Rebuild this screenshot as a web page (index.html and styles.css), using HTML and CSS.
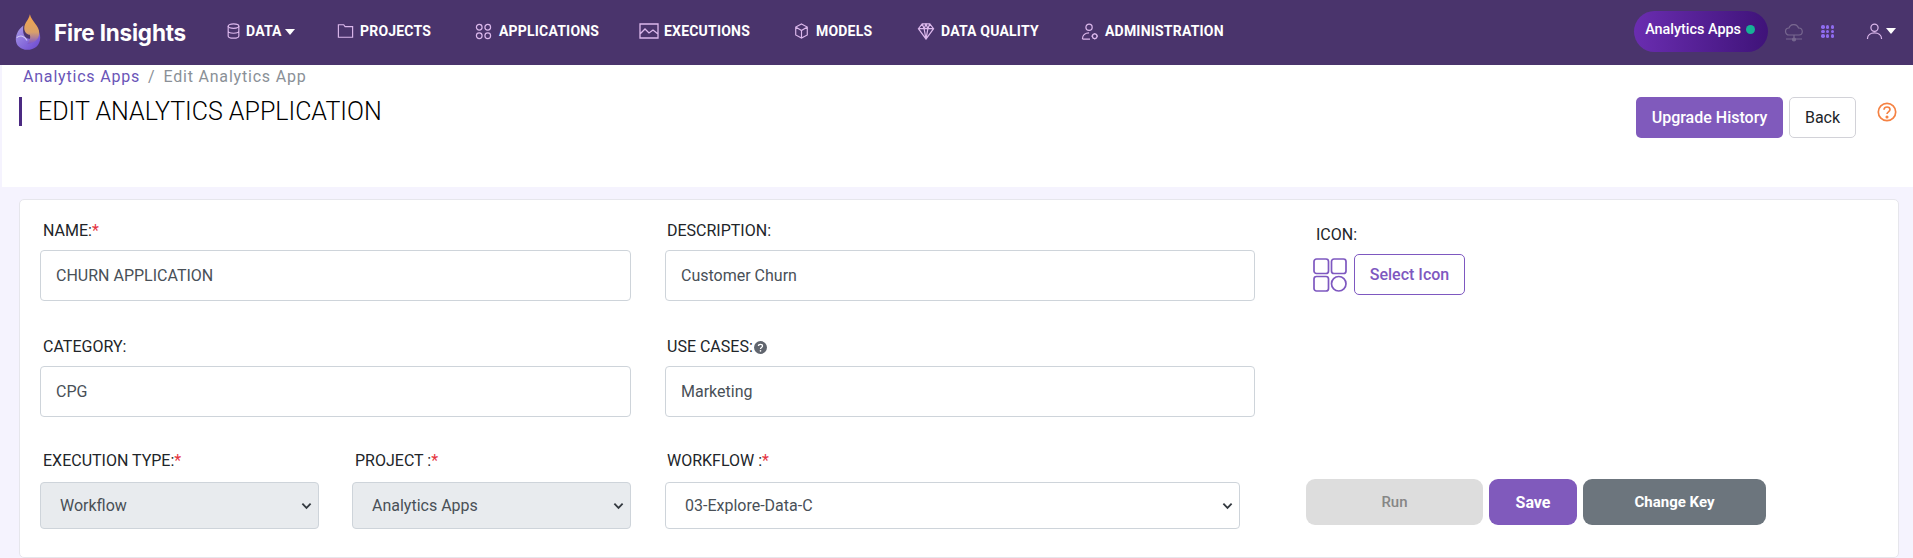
FILE: index.html
```html
<!DOCTYPE html>
<html lang="en">
<head>
<meta charset="utf-8">
<title>Edit Analytics Application</title>
<link rel="stylesheet" href="styles.css">
</head>
<body>
<nav class="nav">
  <div class="brand">
    <svg class="logo" viewBox="0 0 32 40" width="32" height="40">
      <defs>
        <linearGradient id="fl" x1="0" y1="0" x2="0" y2="1"><stop offset="0" stop-color="#f5a54a"/><stop offset=".6" stop-color="#d9a06a"/><stop offset="1" stop-color="#7a55d0"/></linearGradient>
        <linearGradient id="bl" x1="0" y1="0" x2="1" y2="1"><stop offset="0" stop-color="#a99be8"/><stop offset="1" stop-color="#6a45cf"/></linearGradient>
      </defs>
      <path d="M11 13C6 17 3 22 3 28c0 7 6 11 12 11 8 0 14-5 14-13 0-3-1-5-2-7-2 6-6 9-11 8-4-1-6-6-5-14z" fill="url(#bl)"/>
      <path d="M18 1c-1 6-6 9-6 15 0 4 3 7 6 7 1 3 0 7-3 10 7-1 13-5 13-12 0-8-8-12-10-20z" fill="url(#fl)"/>
      <path d="M4 26c4-3 8-2 11 3" fill="none" stroke="#d5cdf5" stroke-width="1.2"/>
    </svg>
    <span class="brand-name">Fire Insights</span>
  </div>
  <ul class="menu">
    <li class="item item-data"><svg class="ico" viewBox="0 0 16 18" width="15" height="16"><ellipse cx="8" cy="3.5" rx="6" ry="2.5"/><path d="M2 3.5v11c0 1.4 2.7 2.5 6 2.5s6-1.100 6-2.500v-11M2 9c0 1.400 2.700 2.500 6 2.500S14 10.400 14 9"/></svg>DATA<span class="caret"></span></li>
    <li class="item item-projects"><svg class="ico" viewBox="0 0 18 18" width="17" height="16"><path d="M1 16V2h6l1.500 2H17v12z"/></svg>PROJECTS</li>
    <li class="item item-apps"><svg class="ico" viewBox="0 0 18 18" width="17" height="17"><circle cx="4.500" cy="4.500" r="3"/><circle cx="13.500" cy="4.500" r="3"/><circle cx="4.500" cy="13.500" r="3"/><circle cx="13.500" cy="13.500" r="3"/></svg>APPLICATIONS</li>
    <li class="item item-exec"><svg class="ico" viewBox="0 0 20 16" width="20" height="16"><path d="M1 1h18v14H1zM1 11l5-5 4 4 4-3 5 4"/></svg>EXECUTIONS</li>
    <li class="item item-models"><svg class="ico" viewBox="0 0 16 18" width="15" height="16"><path d="M8 1l6.500 3.500v9L8 17l-6.500-3.500v-9zM1.500 4.500L8 8.500l6.500-4M8 8.500V17"/></svg>MODELS</li>
    <li class="item item-quality"><svg class="ico" viewBox="0 0 18 18" width="18" height="17"><path d="M5 1h8l4 5-8 11L1 6zM1 6h16M5 1l2 5 2 11 2-11 2-5M7 6l2-5 2 5"/></svg>DATA QUALITY</li>
    <li class="item item-admin"><svg class="ico" viewBox="0 0 18 18" width="18" height="17"><circle cx="8" cy="4.500" r="3.300"/><path d="M1 17c0-4 3-6.500 7-6.500M1 17h8"/><circle cx="14" cy="14" r="2.400"/><path d="M14 10.500v1M14 16.500v1M10.500 14h1M16.500 14h1"/></svg>ADMINISTRATION</li>
  </ul>
  <div class="nav-right">
    <div class="pill">Analytics Apps<span class="dot"></span></div>
    <svg class="cloud" viewBox="0 0 20 18" width="20" height="18"><path d="M5 11a3.500 3.500 0 0 1 0-7 5 5 0 0 1 9.500 0 3.500 3.500 0 0 1 .5 7zM10 11v4M2 15h16"/><circle cx="10" cy="15.500" r="1.500"/></svg>
    <div class="grid-ico"><i></i><i></i><i></i><i></i><i></i><i></i><i></i><i></i><i></i></div>
    <div class="user">
      <svg class="ico" viewBox="0 0 18 18" width="17" height="17"><circle cx="9" cy="5" r="3.800"/><path d="M1.500 17c0-4 3.300-6.500 7.500-6.500s7.500 2.500 7.500 6.500"/></svg>
      <span class="caret"></span>
    </div>
  </div>
</nav>

<header class="head">
  <div class="head-left">
    <div class="crumbs"><a class="crumb-link">Analytics Apps</a><span class="crumb-sep">/</span><span class="crumb-cur">Edit Analytics App</span></div>
    <h1 class="title">EDIT ANALYTICS APPLICATION</h1>
  </div>
  <div class="head-actions">
    <button class="btn btn-purple btn-upgrade">Upgrade History</button>
    <button class="btn btn-back">Back</button>
    <svg class="help" viewBox="0 0 20 20" width="20" height="20"><circle cx="10" cy="10" r="8.700"/><path d="M7 7.700C7 5.800 8.300 5 10 5s3 .9 3 2.500c0 2.300-3 2.300-3 4.500"/><circle class="help-dot" cx="10" cy="15" r=".7"/></svg>
  </div>
</header>

<main class="card">
  <form class="form">
    <div class="field">
      <label class="label">NAME:<span class="req">*</span></label>
      <div class="input">CHURN APPLICATION</div>
    </div>
    <div class="field field-mid">
      <label class="label">DESCRIPTION:</label>
      <div class="input">Customer Churn</div>
    </div>
    <div class="field field-icon">
      <label class="label">ICON:</label>
      <div class="icon-row">
        <svg class="app-icon" viewBox="0 0 34 34" width="34" height="34"><rect x="1" y="1" width="14.500" height="14.500" rx="2.500"/><rect x="18.500" y="1" width="14.500" height="14.500" rx="2.500"/><rect x="1" y="18.500" width="14.500" height="14.500" rx="2.500"/><circle cx="25.750" cy="25.750" r="7.250"/></svg>
        <button type="button" class="btn btn-outline">Select Icon</button>
      </div>
    </div>
    <div class="field">
      <label class="label">CATEGORY:</label>
      <div class="input">CPG</div>
    </div>
    <div class="field field-mid">
      <label class="label">USE CASES:<svg class="q" viewBox="0 0 14 14" width="13" height="13"><circle cx="7" cy="7" r="7"/><path d="M4.800 5.500C4.800 4.200 5.800 3.600 7 3.600s2.200.7 2.200 1.800C9.200 7 7 7 7 8.500"/><circle class="q-dot" cx="7" cy="10.600" r=".9"/></svg></label>
      <div class="input">Marketing</div>
    </div>
    <div class="spacer"></div>
    <div class="pair">
      <div class="field">
        <label class="label label-low">EXECUTION TYPE:<span class="req">*</span></label>
        <div class="select disabled">Workflow<svg class="chev" viewBox="0 0 12 8" width="11" height="8"><path d="M1.500 1.500L6 6l4.500-4.500"/></svg></div>
      </div>
      <div class="field">
        <label class="label label-low">PROJECT :<span class="req">*</span></label>
        <div class="select disabled">Analytics Apps<svg class="chev" viewBox="0 0 12 8" width="11" height="8"><path d="M1.500 1.500L6 6l4.500-4.500"/></svg></div>
      </div>
    </div>
    <div class="field field-wf field-mid">
      <label class="label label-low">WORKFLOW :<span class="req">*</span></label>
      <div class="select">03-Explore-Data-C<svg class="chev" viewBox="0 0 12 8" width="11" height="8"><path d="M1.500 1.500L6 6l4.500-4.500"/></svg></div>
    </div>
    <div class="actions">
      <button type="button" class="btn act act-run">Run</button>
      <button type="button" class="btn act act-save">Save</button>
      <button type="button" class="btn act act-key">Change Key</button>
    </div>
  </form>
</main>
</body>
</html>
```
FILE: styles.css
```css
* { box-sizing: border-box; }
html, body { margin: 0; padding: 0; }
body {
  height: 558px;
  overflow: hidden;
  background: #f5f3fe;
  font-family: Roboto, "Liberation Sans", sans-serif;
  color: #212529;
}
.nav {
  height: 65px;
  background: #4a346c;
  display: flex;
  align-items: center;
  padding-left: 13px;
  color: #fff;
}
.brand { display: flex; align-items: center; width: 213px; flex: none; }
.logo { margin-right: 11px; margin-top: -1px; width: 30px; }
.brand-name { font-family: Inter, "Open Sans", sans-serif; font-size: 22.500px; font-weight: 700; letter-spacing: -.2px; }
.menu { list-style: none; margin: 0; padding: 0; display: flex; align-items: center; flex: 1; }
.item {
  display: flex;
  align-items: center;
  font-size: 14px;
  font-weight: 700;
  letter-spacing: .2px;
  white-space: nowrap;
  margin-top: -3px;
}
.ico {
  fill: none;
  stroke: #dcb8ec;
  stroke-width: 1.300;
  margin-right: 5px;
  flex: none;
}
.item-data { width: 111px; }
.item-projects { width: 138px; }
.item-projects .ico { margin-right: 6px; }
.item-apps { width: 164px; }
.item-apps .ico { margin-right: 7px; }
.item-exec { width: 155px; }
.item-exec .ico { margin-right: 5px; }
.item-models { width: 123px; }
.item-models .ico { margin-right: 7px; }
.item-quality { width: 164px; }
.item-quality .ico { margin-right: 6px; }
.item-admin .ico { margin-right: 6px; }
.caret {
  display: inline-block;
  width: 0;
  height: 0;
  border-left: 5px solid transparent;
  border-right: 5px solid transparent;
  border-top: 6px solid #fff;
  margin-left: 3px;
  margin-top: 2px;
}
.nav-right { display: flex; align-items: center; flex: none; }
.pill {
  width: 134px;
  height: 41px;
  margin-top: -3px;
  margin-right: 16px;
  border-radius: 21px;
  background: linear-gradient(90deg, #6a2db0, #3f1379);
  font-size: 14.400px;
  font-weight: 500;
  display: flex;
  align-items: center;
  padding: 0 0 4px 11px;
  white-space: nowrap;
}
.dot { width: 9px; height: 9px; border-radius: 50%; background: #17b197; margin-left: 5px; }
.cloud { fill: none; stroke: #77678f; stroke-width: 1.200; margin-right: 17px; }
.cloud circle { fill: #77678f; }
.grid-ico { display: grid; grid-template-columns: repeat(3, 3.500px); gap: 1.200px; margin-right: 32px; margin-top: -2px; }
.grid-ico i { display: block; width: 3.500px; height: 3.500px; border-radius: 50%; background: #8f6cf0; }
.user { display: flex; align-items: center; margin-right: 17px; margin-top: -2px; }
.user .ico { margin-right: 0; }
.user .caret { margin-left: 3px; margin-top: -1px; }

.head {
  height: 122px;
  margin-left: 2px;
  background: #fff;
  display: flex;
  justify-content: space-between;
  padding-left: 17px;
}
.head-left { flex: 1; }
.crumbs { padding: 2px 0 0 4px; font-size: 16px; line-height: 20px; letter-spacing: .8px; }
.crumb-link { color: #6a55b8; }
.crumb-sep { color: #8a9097; margin: 0 8px; }
.crumb-cur { color: #8a9097; }
.title {
  margin: 10px 0 0;
  height: 29px;
  padding-left: 16px;
  border-left: 3px solid #4b2a82;
  font-size: 25px;
  font-weight: 300;
  color: #000;
  line-height: 29px;
  letter-spacing: 0;
}
.head-actions { display: flex; align-items: flex-start; padding: 32px 16px 0 0; }
.btn {
  font-family: inherit;
  border-radius: 5px;
  border: 1px solid transparent;
  font-size: 15px;
  cursor: pointer;
  padding: 0;
}
.btn-purple { background: #805abc; color: #fff; font-weight: 500; }
.btn-upgrade { width: 147px; height: 41px; margin-right: 6px; font-size: 16px; }
.btn-back { width: 67px; height: 41px; background: #fff; border-color: #d2d2d8; color: #212529; margin-right: 21px; font-size: 16px; }
.help { fill: none; stroke: #f58243; stroke-width: 1.700; margin-top: 5px; }
.help-dot { fill: #f58243; }

.card {
  margin: 12px 14px 0 19px;
  height: 359px;
  overflow: hidden;
  background: #fff;
  border: 1px solid #e6e6ec;
  border-radius: 5px;
  padding: 0 0 0 20px;
}
.form {
  display: grid;
  grid-template-columns: 591px 590px 1fr;
  column-gap: 34px;
  grid-template-rows: 116px 115px auto;
}
.field { display: flex; flex-direction: column; }
.label {
  display: block;
  font-size: 16px;
  line-height: 18px;
  margin: 22px 0 10px 3px;
  color: #212529;
}
.label-low { margin: 21px 0 12px 3px; }
.field-mid .label { margin-left: 2px; }
.req { color: #e5343f; }
.q { margin-left: 1px; vertical-align: -1.500px; fill: #60656e; }
.q path { fill: none; stroke: #fff; stroke-width: 1.400; }
.q-dot { fill: #fff; }
.input, .select {
  height: 51px;
  border: 1px solid #ced4da;
  border-radius: 4px;
  background: #fff;
  display: flex;
  align-items: center;
  padding-left: 15px;
  font-size: 16px;
  color: #495057;
  position: relative;
}
.field-icon { padding-left: 24px; }
.field-icon .label { margin: 26px 0 10px 3px; }
.icon-row { display: flex; align-items: center; }
.app-icon { fill: none; stroke: #7e58c0; stroke-width: 1.700; margin-right: 7px; }
.btn-outline { width: 111px; height: 41px; background: #fff; color: #7e58c0; border-color: #7e58c0; font-weight: 500; font-size: 16px; }
.pair { display: grid; grid-template-columns: 279px 279px; column-gap: 33px; }
.select { height: 47px; padding-left: 19px; justify-content: space-between; padding-right: 6px; }
.select.disabled { background: #e8ebee; }
.chev { fill: none; stroke: #343a40; stroke-width: 2; }
.field-wf { width: 575px; }
.actions { display: flex; gap: 6px; padding: 48px 0 0 17px; }
.act { height: 46px; border-radius: 9px; font-size: 15px; font-weight: 700; border: none; color: #fff; }
.act-run { width: 177px; background: #dddddd; color: #868686; font-weight: 500; }
.act-save { width: 88px; background: #805abc; font-size: 16px; }
.act-key { width: 183px; background: #6c757d; }
```
